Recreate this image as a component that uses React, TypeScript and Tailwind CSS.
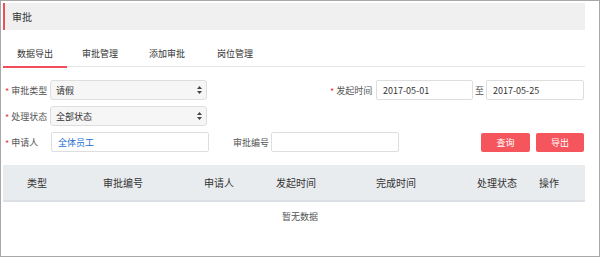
import React from "react";

const font = { fontFamily: '"Noto Sans CJK SC", "Noto Sans", sans-serif' };

function Arrows() {
  return (
    <svg width="5" height="8" viewBox="0 0 5 8" className="shrink-0">
      <path d="M2.5 0 L5 3 L0 3 Z" fill="#444" />
      <path d="M2.5 8 L5 5 L0 5 Z" fill="#444" />
    </svg>
  );
}

function Label({ text, star = true, w }: { text: string; star?: boolean; w: string }) {
  return (
    <div className={`flex items-center shrink-0 whitespace-nowrap pl-[2px] ${w}`}>
      {star && <span className="text-[#e4393c] text-[9px] leading-none mr-[2px] mt-[2px]">*</span>}
      <span className="text-[9px] text-[#555] leading-none">{text}</span>
    </div>
  );
}

function Select({ value }: { value: string }) {
  return (
    <div className="w-[157px] h-[20px] bg-[#f6f6f6] border border-[#dedede] rounded-[3px] flex items-center justify-between pl-[5px] pr-[4px]">
      <span className="text-[9px] text-[#333] leading-none">{value}</span>
      <Arrows />
    </div>
  );
}

export default function App() {
  const tabs = [
    { t: "数据导出", w: "w-[64px]", active: true },
    { t: "审批管理", w: "w-[66px]" },
    { t: "添加审批", w: "w-[68px]" },
    { t: "岗位管理", w: "w-[68px]" },
  ];
  const cols = ["类型", "审批编号", "申请人", "发起时间", "完成时间", "处理状态", "操作"];
  return (
    <div style={font} className="w-[600px] h-[257px] bg-white border border-[#a8a8a8] pl-[2px] pt-[2px] pr-[14px] overflow-hidden">
      <div className="h-[27px] bg-[#f0f0f0] border-l-2 border-[#f04f59] pl-[7px] flex items-center">
        <span className="text-[10px] text-[#333] leading-none">审批</span>
      </div>
      <div className="flex items-start h-[37px] border-b border-[#e6e6e6]">
        {tabs.map((tab) => (
          <div
            key={tab.t}
            className={`${tab.w} h-[38px] pt-[10px] flex items-center justify-center border-b-2 ${tab.active ? "border-[#f04f59]" : "border-transparent"}`}
          >
            <span className="text-[9px] text-[#333] leading-none">{tab.t}</span>
          </div>
        ))}
      </div>

      <div className="mt-[13px] flex flex-col gap-[6px]">
        <div className="flex items-center justify-between h-[20px] pr-[1px]">
          <div className="flex items-center">
            <Label text="审批类型" w="w-[47px]" />
            <Select value="请假" />
          </div>
          <div className="flex items-center">
            <Label text="发起时间" w="w-[48px]" />
            <div className="w-[97px] h-[20px] bg-white border border-[#dedede] rounded-[2px] flex items-center pl-[6px]">
              <span className="text-[9px] text-[#333] leading-none">2017-05-01</span>
            </div>
            <span className="text-[9px] text-[#555] leading-none w-[13px] text-center">至</span>
            <div className="w-[98px] h-[20px] bg-white border border-[#dedede] rounded-[2px] flex items-center pl-[6px]">
              <span className="text-[9px] text-[#333] leading-none">2017-05-25</span>
            </div>
          </div>
        </div>
        <div className="flex items-center h-[20px]">
          <Label text="处理状态" w="w-[47px]" />
          <Select value="全部状态" />
        </div>
        <div className="flex items-center h-[20px] pr-[1px]">
          <Label text="申请人" w="w-[48px]" />
          <div className="w-[158px] h-[20px] bg-white border border-[#dedede] rounded-[2px] flex items-center pl-[6px]">
            <span className="text-[9px] text-[#1f6fd6] leading-none">全体员工</span>
          </div>
          <Label text="审批编号" star={false} w="w-[62px] pl-[24px]" />
          <div className="w-[128px] h-[20px] bg-white border border-[#dedede] rounded-[2px]" />
          <div className="ml-auto flex items-center gap-[6px]">
            <div className="w-[49px] h-[19px] bg-[#f5555c] rounded-[2px] flex items-center justify-center">
              <span className="text-[9px] text-white leading-none">查询</span>
            </div>
            <div className="w-[48px] h-[19px] bg-[#f5555c] rounded-[2px] flex items-center justify-center">
              <span className="text-[9px] text-white leading-none">导出</span>
            </div>
          </div>
        </div>
      </div>

      <div className="mt-[13px]">
        <div className="grid grid-cols-[68px_104px_88px_66px_134px_68px_36px_1fr] h-[37px] bg-[#e9ecef] border-b-2 border-[#dde1e5] items-center">
          {cols.map((c) => (
            <div key={c} className="text-center text-[10px] text-[#333] leading-none">
              {c}
            </div>
          ))}
          <div />
        </div>
        <div className="h-[28px] flex items-center justify-center pl-[12px]">
          <span className="text-[9px] text-[#555] leading-none">暂无数据</span>
        </div>
      </div>
    </div>
  );
}
